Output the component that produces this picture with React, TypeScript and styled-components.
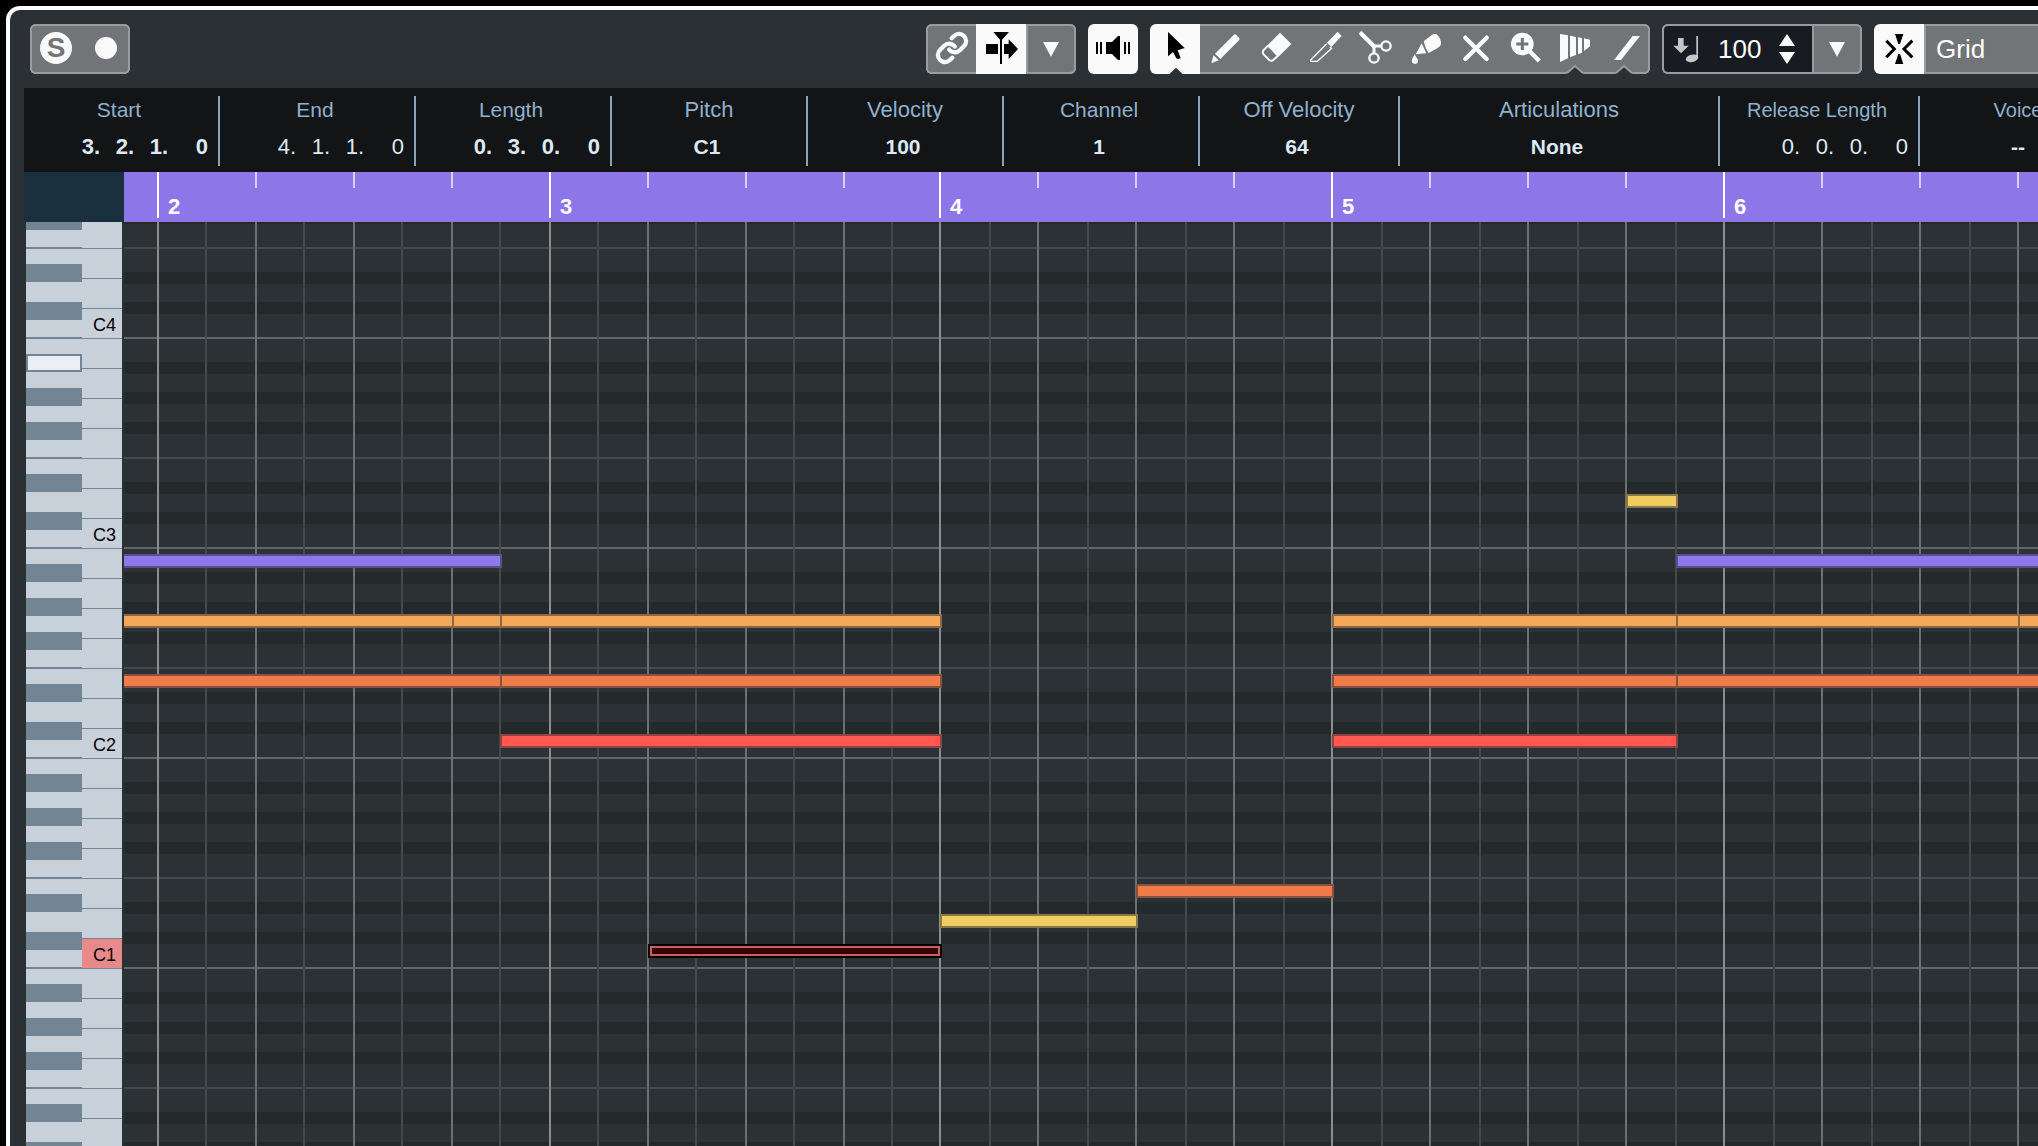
import React from "react";
import styled, { createGlobalStyle, css } from "styled-components";

const c = {
  panel: "#2b3034",
  button: "#717578",
  edge: "#9b9b9f",
  on: "#fafafa",
  info: "#121416",
  label: "#8fb1cc",
  value: "#dce9f5",
  ruler: "#8d76e8",
  keyWhite: "#c8d0da",
  keyBlack: "#728594",
};

const GlobalStyle = createGlobalStyle`
  *, *::before, *::after { box-sizing: border-box; }
  body {
    margin: 0;
    background: #000;
    font-family: "Liberation Sans", Arial, Helvetica, sans-serif;
  }
  button, input, select { font: inherit; color: inherit; }
`;

/* ---------- window ---------- */

const Screen = styled.div`
  height: 100vh;
  padding: 6px 0 0 6px;
  overflow: hidden;
`;

const EditorWindow = styled.main`
  height: 100%;
  display: flex;
  flex-direction: column;
  overflow: hidden;
  background: ${c.panel};
  border: solid #fffcfb;
  border-width: 4px 0 0 4px;
  border-top-left-radius: 14px;
`;

/* ---------- toolbar ---------- */

const Toolbar = styled.header`
  flex: none;
  display: grid;
  grid-template-columns: 896px minmax(0, 1fr);
  padding: 14px 0 14px 20px;
`;

const ToolRow = styled.div`
  display: flex;
  gap: 12px;
  overflow: hidden;
`;

const Group = styled.div`
  flex: none;
  display: flex;
`;

const ends = css`
  &:first-child {
    border-top-left-radius: 6px;
    border-bottom-left-radius: 6px;
  }
  &:last-child {
    border-top-right-radius: 6px;
    border-bottom-right-radius: 6px;
  }
`;

const frame = (color: string, sides: string) => {
  const parts = [`inset 0 2px 0 ${color}`, `inset 0 -2px 0 ${color}`];
  if (sides.includes("l")) parts.push(`inset 2px 0 0 ${color}`);
  if (sides.includes("r")) parts.push(`inset -2px 0 0 ${color}`);
  return parts.join(", ");
};

const ToolButton = styled.button<{ $on?: boolean; $sides?: string }>`
  flex: none;
  width: 50px;
  height: 50px;
  padding: 0;
  border: 0;
  display: flex;
  align-items: center;
  justify-content: center;
  color: ${(p) => (p.$on ? "#000" : c.on)};
  background: ${(p) => (p.$on ? c.on : c.button)};
  box-shadow: ${(p) => (p.$on ? "none" : frame(c.edge, p.$sides ?? ""))};
  ${ends}
`;

const SoloBadge = styled.span`
  width: 32px;
  height: 32px;
  margin: 0 0 2px 2px;
  border-radius: 50%;
  background: ${c.on};
  color: ${c.button};
  font-size: 28px;
  font-weight: 700;
  line-height: 32px;
  text-align: center;
`;

const RecordDot = styled.span`
  width: 22px;
  height: 22px;
  margin: 0 0 2px 2px;
  border-radius: 50%;
  background: ${c.on};
`;

const VelocityBox = styled.div`
  width: 150px;
  height: 50px;
  display: flex;
  align-items: center;
  background: #191b23;
  box-shadow: ${frame(c.edge, "l")};
  ${ends}
`;

const VelocityInput = styled.input`
  width: 56px;
  height: 46px;
  padding: 0 0 0 6px;
  border: 0;
  background: transparent;
  color: #fff;
  font-size: 26px;
`;

const Stepper = styled.div`
  display: flex;
  flex-direction: column;
  gap: 6px;
  margin-left: 10px;
`;

const StepButton = styled.button`
  width: 18px;
  height: 12px;
  padding: 0;
  border: 0;
  background: transparent;
  display: flex;
`;

const GridSelect = styled.select`
  width: 240px;
  height: 50px;
  padding: 0 0 0 12px;
  border: 0;
  border-radius: 0;
  appearance: none;
  background: ${c.button};
  color: #fff;
  font-size: 26px;
  box-shadow: ${frame(c.edge, "l")};
`;

const Svg = styled.svg`
  flex: none;
  display: block;
`;

const Icon = ({ children }: { children: React.ReactNode }) => (
  <Svg width="50" height="50" viewBox="0 0 150 150" fill="currentColor" aria-hidden="true">
    {children}
  </Svg>
);

const Notch = ({ x }: { x: number }) => (
  <>
    <path d={`M${x - 27} 151H${x + 27}L${x} 127Z`} fill={c.panel} />
    <path d={`M${x - 24} 147L${x} 126L${x + 24} 147`} fill="none" stroke={c.edge} strokeWidth="6" />
  </>
);

const DownTriangle = () => (
  <Icon>
    <path d="M51 54H99L75 98Z" />
  </Icon>
);

const LinkIcon = () => (
  <Icon>
    <g
      transform="translate(27 21) scale(4.25)"
      fill="none"
      stroke="currentColor"
      strokeWidth="3"
      strokeLinecap="round"
    >
      <path d="M10 13a5 5 0 0 0 7.54.54l3-3a5 5 0 0 0-7.07-7.07l-1.72 1.71" />
      <path d="M14 11a5 5 0 0 0-7.54-.54l-3 3a5 5 0 0 0 7.07 7.07l1.71-1.71" />
    </g>
  </Icon>
);

const AutoScrollIcon = () => (
  <Icon>
    <path d="M52 24H99L78 47V120H72V47Z" />
    <path d="M30 60H66V90H30Z" />
    <path d="M84 60H98V46L126 75L98 105V90H84Z" />
  </Icon>
);

const SpeakerIcon = () => (
  <Icon>
    <path d="M24 54h6v36h-6zM36 54h6v36h-6zM108 54h6v36h-6zM120 54h6v36h-6z" />
    <path d="M54 54H72L90 36H96V108H90L72 90H54Z" />
  </Icon>
);

const PointerIcon = () => (
  <Icon>
    <path d="M54 24V97L69 84L79 103Q85 108 92 102L83 79L104 72Z" />
    <path d="M57 151L78 131L99 151Z" fill={c.panel} />
  </Icon>
);

const PencilIcon = () => (
  <Icon>
    <path d="M101 33Q104 29 108 32L118 42Q120 46 117 49L61 105L45 89Z" />
    <path d="M41 94L56 109L36 117Q33 116 35 112Z" />
  </Icon>
);

const EraserIcon = () => (
  <Icon>
    <path d="M90 26L124 60L84 100L51 65Z" />
    <path
      d="M54 65L41 78Q36 84 41 91L58 108Q64 113 70 108L84 95"
      fill="none"
      stroke="currentColor"
      strokeWidth="6"
    />
  </Icon>
);

const KnifeIcon = () => (
  <Icon>
    <path d="M113 23L125 36L94 69L81 56Z" />
    <path
      d="M80 59L32 108V112H52L95 73L89 69"
      fill="none"
      stroke="currentColor"
      strokeWidth="4"
    />
  </Icon>
);

const ScissorsIcon = () => (
  <Icon>
    <g fill="none" stroke="currentColor">
      <path d="M34 29L72 67" strokeWidth="13" strokeLinecap="round" />
      <path d="M72 64V88M70 66H94" strokeWidth="9" />
      <circle cx="108" cy="66" r="14" strokeWidth="7" />
      <circle cx="72" cy="102" r="14" strokeWidth="7" />
    </g>
  </Icon>
);

const GlueIcon = () => (
  <Icon>
    <path d="M71 52L96 32Q108 27 113 34Q124 46 123 60Q122 68 112 73L86 87Q75 72 71 52Z" />
    <path d="M65 58L79 88L47 91Z" />
    <path d="M44 90Q46 96 53 106Q57 118 45 120Q33 119 36 106Z" />
  </Icon>
);

const MuteIcon = () => (
  <Icon>
    <path d="M46 41L110 105M110 41L46 105" stroke="currentColor" strokeWidth="13" strokeLinecap="round" />
  </Icon>
);

const ZoomIcon = () => (
  <Icon>
    <circle cx="67" cy="60" r="34" />
    <path d="M84 77L118 111" stroke="currentColor" strokeWidth="13" />
    <path d="M49 60H85M67 42V78" stroke={c.button} strokeWidth="9" />
  </Icon>
);

const TrimIcon = () => (
  <Icon>
    <path d="M30 30L54 34V103L30 114Z" />
    <path d="M60 35L78 39V93L60 100Z" />
    <path d="M84 40L96 42V86L84 91Z" />
    <path d="M102 43L120 47V67L102 81Z" />
    <Notch x={75} />
  </Icon>
);

const LineIcon = () => (
  <Icon>
    <path d="M98 36H120L63 108H42Z" />
    <Notch x={72} />
  </Icon>
);

const InsertVelocityIcon = () => (
  <Icon>
    <g fill="#c6c6c6">
      <path d="M48 42H65V65H80L57 88L34 65H48Z" />
      <path d="M103 36H108V102H103Z" />
      <ellipse cx="90" cy="103" rx="19" ry="11" transform="rotate(-12 90 103)" />
    </g>
  </Icon>
);

const SnapIcon = () => (
  <Icon>
    <path d="M37 50L61 75L37 100M115 50L90 75L115 100" fill="none" stroke="currentColor" strokeWidth="9" />
    <path d="M63 30H88L78 60H73Z" />
    <path d="M73 90H78L88 120H63Z" />
  </Icon>
);

/* ---------- info line ---------- */

const InfoLine = styled.section`
  flex: none;
  display: flex;
  margin-left: 14px;
  padding: 8px 0 6px;
  background: ${c.info};
  overflow: hidden;
`;

const InfoCell = styled.div<{ $width: number }>`
  flex: none;
  width: ${(p) => p.$width}px;
  height: 70px;
  display: flex;
  flex-direction: column;
  gap: 10px;
  border-right: 2px solid #86a5bd;
  &:last-child {
    border-right: 0;
  }
`;

const InfoLabel = styled.span<{ $size: number }>`
  padding-right: ${(p) => (p.$size < 22 ? 4 : 0)}px;
  color: ${c.label};
  font-size: ${(p) => p.$size}px;
  line-height: 28px;
  text-align: center;
  white-space: nowrap;
`;

const InfoValue = styled.span`
  padding-right: 4px;
  color: ${c.value};
  font-size: 21px;
  font-weight: 700;
  line-height: 26px;
  text-align: center;
`;

const Position = styled.span<{ $bold?: boolean }>`
  display: grid;
  grid-template-columns: 34px 34px 46px auto;
  justify-content: end;
  padding-right: 10px;
  color: ${c.value};
  font-size: 22px;
  font-weight: ${(p) => (p.$bold ? 700 : 400)};
  line-height: 26px;
`;

type Info = { label: string; width: number; size: number; value?: string; position?: string[]; bold?: boolean };

const infos: Info[] = [
  { label: "Start", width: 196, size: 21, position: ["3.", "2.", "1.", "0"], bold: true },
  { label: "End", width: 196, size: 21, position: ["4.", "1.", "1.", "0"] },
  { label: "Length", width: 196, size: 21, position: ["0.", "3.", "0.", "0"], bold: true },
  { label: "Pitch", width: 196, size: 22, value: "C1" },
  { label: "Velocity", width: 196, size: 22, value: "100" },
  { label: "Channel", width: 196, size: 21, value: "1" },
  { label: "Off Velocity", width: 200, size: 22, value: "64" },
  { label: "Articulations", width: 320, size: 22, value: "None" },
  { label: "Release Length", width: 200, size: 20, position: ["0.", "0.", "0.", "0"] },
  { label: "Voice", width: 200, size: 20, value: "--" },
];

/* ---------- ruler ---------- */

const Timeline = styled.section`
  flex: none;
  display: flex;
  height: 50px;
  margin-left: 14px;
`;

const RulerCorner = styled.div`
  flex: none;
  width: 100px;
  background: #1b303e;
`;

const Ruler = styled.div`
  flex: 1;
  display: flex;
  padding: 0 0 4px 33px;
  background: ${c.ruler};
  overflow: hidden;
`;

const RulerBar = styled.div<{ $width: number }>`
  flex: none;
  width: ${(p) => p.$width}px;
  display: grid;
  border-left: 2px solid #fff;
`;

const Ticks = styled.div`
  grid-area: 1 / 1;
  display: flex;
  gap: 96px;
  padding-left: 96px;
`;

const Tick = styled.i`
  flex: none;
  width: 2px;
  height: 16px;
  background: #d9d0f7;
`;

const BarNumber = styled.span`
  grid-area: 1 / 1;
  align-self: end;
  padding-left: 9px;
  color: #fff;
  font-size: 22px;
  font-weight: 700;
  line-height: 22px;
`;

/* ---------- keyboard ---------- */

const Editor = styled.section`
  flex: 1;
  min-height: 0;
  display: flex;
  margin-left: 16px;
  overflow: hidden;
`;

const Keyboard = styled.div`
  flex: none;
  width: 96px;
  margin-right: 2px;
  overflow: hidden;
`;

const KeyScroll = styled.div`
  margin-top: -93px;
`;

const KeyOctave = styled.div`
  display: flex;
  height: 210px;
  background: ${c.keyWhite};
`;

const BlackKeys = styled.div`
  flex: none;
  width: 56px;
  display: flex;
  flex-direction: column;
`;

const BlackKey = styled.button<{ $gap: number; $lit?: boolean }>`
  flex: none;
  height: 18px;
  margin: ${(p) => p.$gap}px 0 0;
  padding: 0;
  border: 2px solid ${c.keyBlack};
  background: ${(p) => (p.$lit ? "#eaeff3" : c.keyBlack)};
`;

const KeySplit = styled.div`
  flex: none;
  height: 2px;
  margin-top: 17px;
  background: ${c.keyBlack};
`;

const WhiteKeys = styled.div`
  flex: 1;
  display: flex;
  flex-direction: column;
`;

const WhiteKey = styled.button<{ $lit?: boolean }>`
  flex: none;
  height: 30px;
  padding: 2px 6px 0 0;
  border: 0;
  border-bottom: 1px solid ${c.keyBlack};
  background: ${(p) => (p.$lit ? "#e88a8b" : c.keyWhite)};
  color: #000;
  font-size: 18px;
  line-height: 26px;
  text-align: right;
`;

/* ---------- note grid ---------- */

const Roll = styled.div`
  position: relative;
  flex: 1;
  display: grid;
  grid-template: minmax(0, 1fr) / minmax(0, 1fr);
  overflow: hidden;
`;

const Lanes = styled.div`
  grid-area: 1 / 1;
  margin-top: -95px;
`;

const laneTone = {
  white: "#2c3135",
  black: "#24292c",
  octave: "#636769",
  split: "#43484b",
};

const Lane = styled.div<{ $height: number; $tone: keyof typeof laneTone }>`
  height: ${(p) => p.$height}px;
  background: ${(p) => laneTone[p.$tone]};
`;

const octaveLanes: [number, keyof typeof laneTone][] = [
  [2, "octave"],
  [23, "white"],
  [12, "black"],
  [18, "white"],
  [12, "black"],
  [18, "white"],
  [12, "black"],
  [23, "white"],
  [2, "split"],
  [23, "white"],
  [12, "black"],
  [18, "white"],
  [12, "black"],
  [23, "white"],
];

const Bars = styled.div`
  grid-area: 1 / 1;
  display: flex;
  padding-left: 33px;
`;

const Bar = styled.div<{ $width: number; $half: number }>`
  flex: none;
  width: ${(p) => p.$width}px;
  display: flex;

  & > i {
    flex: 0 1 98px;
    display: flex;
    border-left: 2px solid #6c7073;
  }
  & > i:first-child {
    border-left-color: #8b8d8f;
  }
  & > i:last-child {
    flex: 1 1 0;
  }
  & > i::after {
    content: "";
    width: 2px;
    margin-left: ${(p) => p.$half - 2}px;
    background: #45494c;
  }
`;

const noteColors = {
  violet: ["#8f78ee", "#5a5088"],
  amber: ["#f5a857", "#8c6748"],
  coral: ["#f07c4c", "#87523f"],
  red: ["#ff5851", "#914245"],
  yellow: ["#f0cd60", "#8b7848"],
  selected: ["#370000", "#000"],
};

const Note = styled.div<{ $x: number; $y: number; $w: number; $color: keyof typeof noteColors }>`
  position: absolute;
  left: ${(p) => p.$x}px;
  top: ${(p) => p.$y}px;
  width: ${(p) => p.$w}px;
  height: 14px;
  background: ${(p) => noteColors[p.$color][0]};
  border: 2px solid ${(p) => noteColors[p.$color][1]};
  box-shadow: ${(p) => (p.$color === "selected" ? "inset 0 0 0 2px #c9605e" : "none")};
`;

const notes: [number, number, number, keyof typeof noteColors][] = [
  [-20, 332, 398, "violet"],
  [-20, 392, 350, "amber"],
  [328, 392, 50, "amber"],
  [376, 392, 442, "amber"],
  [-20, 452, 398, "coral"],
  [376, 452, 442, "coral"],
  [376, 512, 442, "red"],
  [524, 722, 294, "selected"],
  [816, 692, 198, "yellow"],
  [1012, 662, 198, "coral"],
  [1502, 272, 52, "yellow"],
  [1552, 332, 600, "violet"],
  [1208, 392, 346, "amber"],
  [1552, 392, 344, "amber"],
  [1894, 392, 258, "amber"],
  [1208, 452, 346, "coral"],
  [1552, 452, 600, "coral"],
  [1208, 512, 346, "red"],
];

const bars = [
  { number: 2, width: 392, half: 48 },
  { number: 3, width: 390, half: 48 },
  { number: 4, width: 392, half: 50 },
  { number: 5, width: 392, half: 50 },
  { number: 6, width: 392, half: 50 },
];

const octaves = [
  { id: 4, label: "C4" },
  { id: 3, label: "C3" },
  { id: 2, label: "C2" },
  { id: 1, label: "C1" },
  { id: 0, label: "" },
];

const tools = [
  { name: "Draw", icon: <PencilIcon /> },
  { name: "Erase", icon: <EraserIcon /> },
  { name: "Trim", icon: <KnifeIcon /> },
  { name: "Split", icon: <ScissorsIcon /> },
  { name: "Glue", icon: <GlueIcon /> },
  { name: "Mute", icon: <MuteIcon /> },
  { name: "Zoom", icon: <ZoomIcon /> },
  { name: "Time Warp", icon: <TrimIcon /> },
];

export default function App() {
  return (
    <Screen>
      <GlobalStyle />
      <EditorWindow>
        <Toolbar>
          <Group>
            <ToolButton $sides="l" aria-label="Solo editor">
              <SoloBadge>S</SoloBadge>
            </ToolButton>
            <ToolButton $sides="r" aria-label="Record in editor">
              <RecordDot />
            </ToolButton>
          </Group>
          <ToolRow>
            <Group>
              <ToolButton $sides="l" aria-label="Link project and editor">
                <LinkIcon />
              </ToolButton>
              <ToolButton $on aria-label="Auto-scroll">
                <AutoScrollIcon />
              </ToolButton>
              <ToolButton $sides="lr" aria-label="Auto-scroll settings">
                <DownTriangle />
              </ToolButton>
            </Group>
            <Group>
              <ToolButton $on aria-label="Acoustic feedback">
                <SpeakerIcon />
              </ToolButton>
            </Group>
            <Group>
              <ToolButton $on aria-label="Select">
                <PointerIcon />
              </ToolButton>
              {tools.map((tool) => (
                <ToolButton key={tool.name} aria-label={tool.name}>
                  {tool.icon}
                </ToolButton>
              ))}
              <ToolButton $sides="r" aria-label="Line">
                <LineIcon />
              </ToolButton>
            </Group>
            <Group>
              <VelocityBox>
                <InsertVelocityIcon />
                <VelocityInput aria-label="Insert velocity" defaultValue="100" />
                <Stepper>
                  <StepButton aria-label="Increase velocity">
                    <Svg width="18" height="12" viewBox="0 0 18 12" fill={c.on}>
                      <path d="M1 12L9 0L17 12Z" />
                    </Svg>
                  </StepButton>
                  <StepButton aria-label="Decrease velocity">
                    <Svg width="18" height="12" viewBox="0 0 18 12" fill={c.on}>
                      <path d="M1 0H17L9 12Z" />
                    </Svg>
                  </StepButton>
                </Stepper>
              </VelocityBox>
              <ToolButton $sides="lr" aria-label="Velocity presets">
                <DownTriangle />
              </ToolButton>
            </Group>
            <Group>
              <ToolButton $on aria-label="Snap">
                <SnapIcon />
              </ToolButton>
              <GridSelect aria-label="Snap type" defaultValue="Grid">
                <option>Grid</option>
              </GridSelect>
            </Group>
          </ToolRow>
        </Toolbar>

        <InfoLine>
          {infos.map((info) => (
            <InfoCell key={info.label} $width={info.width}>
              <InfoLabel $size={info.size}>{info.label}</InfoLabel>
              {info.position ? (
                <Position $bold={info.bold}>
                  {info.position.map((part, i) => (
                    <span key={i}>{part}</span>
                  ))}
                </Position>
              ) : (
                <InfoValue>{info.value}</InfoValue>
              )}
            </InfoCell>
          ))}
        </InfoLine>

        <Timeline>
          <RulerCorner />
          <Ruler>
            {bars.map((bar) => (
              <RulerBar key={bar.number} $width={bar.width}>
                <Ticks>
                  <Tick />
                  <Tick />
                  <Tick />
                </Ticks>
                <BarNumber>{bar.number}</BarNumber>
              </RulerBar>
            ))}
          </Ruler>
        </Timeline>

        <Editor>
          <Keyboard>
            <KeyScroll>
              {octaves.map(({ id, label }) => (
                <KeyOctave key={id}>
                  <BlackKeys>
                    <BlackKey $gap={15} $lit={id === 3} />
                    <BlackKey $gap={16} />
                    <BlackKey $gap={16} />
                    <KeySplit />
                    <BlackKey $gap={15} />
                    <BlackKey $gap={20} />
                    <KeySplit />
                  </BlackKeys>
                  <WhiteKeys>
                    <WhiteKey />
                    <WhiteKey />
                    <WhiteKey />
                    <WhiteKey />
                    <WhiteKey />
                    <WhiteKey />
                    <WhiteKey $lit={id === 1}>{label}</WhiteKey>
                  </WhiteKeys>
                </KeyOctave>
              ))}
            </KeyScroll>
          </Keyboard>
          <Roll>
            <Lanes>
              {octaves.map(({ id }) => (
                <div key={id}>
                  {octaveLanes.map(([height, tone], i) => (
                    <Lane key={i} $height={height} $tone={tone} />
                  ))}
                </div>
              ))}
            </Lanes>
            <Bars>
              {bars.map((bar) => (
                <Bar key={bar.number} $width={bar.width} $half={bar.half}>
                  <i />
                  <i />
                  <i />
                  <i />
                </Bar>
              ))}
            </Bars>
            {notes.map(([x, y, w, color], i) => (
              <Note key={i} $x={x} $y={y} $w={w} $color={color} />
            ))}
          </Roll>
        </Editor>
      </EditorWindow>
    </Screen>
  );
}
